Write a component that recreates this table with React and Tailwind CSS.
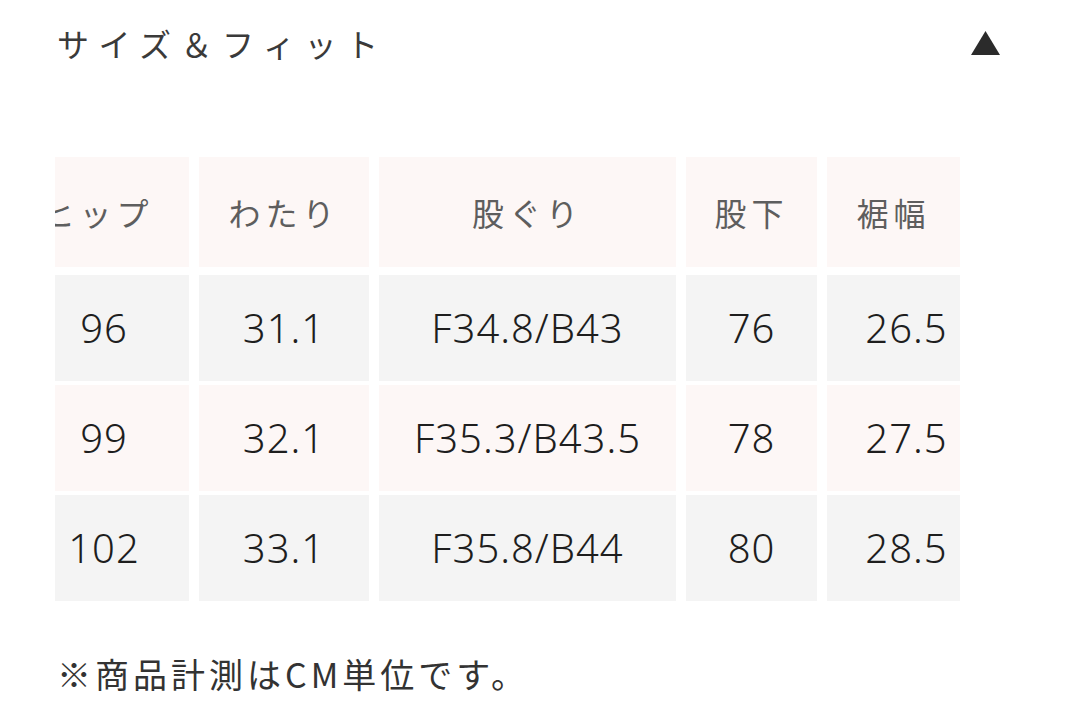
const headers = ['ヒップ', 'わたり', '股ぐり', '股下', '裾幅'];

const rows = [
  ['96', '31.1', 'F34.8/B43', '76', '26.5'],
  ['99', '32.1', 'F35.3/B43.5', '78', '27.5'],
  ['102', '33.1', 'F35.8/B44', '80', '28.5'],
];

const font = { fontFamily: '"Noto Sans CJK JP", "Noto Sans", sans-serif' };
const numFont = { fontFamily: '"Noto Sans", "Noto Sans CJK JP", sans-serif' };

const App = () => {
  return (
    <div className="w-[1080px] h-[725px] bg-white overflow-hidden" style={font}>
      <div className="h-[86px] flex items-center justify-between pl-[57px] pr-[80px]">
        <h2 className="text-[32px] leading-[40px] tracking-[9.5px] text-[#3a3a3a] font-normal">サイズ＆フィット</h2>
        <svg width="29" height="24" viewBox="0 0 29 24">
          <polygon points="14.5,0 29,24 0,24" fill="#2b2b2b" />
        </svg>
      </div>

      <div className="mt-[71px] ml-[55px] w-[905px] overflow-hidden">
        <div className="-ml-[36px] w-max">
          <div className="grid grid-cols-[170px_170px_297px_131px_133px] gap-x-[10px] h-[110px]">
            {headers.map((h, j) => (
              <div
                key={h}
                className={
                  'bg-[#fdf7f6] flex items-center justify-center text-[32px] tracking-[5px] text-[#5e5e5e]' +
                  (j === 0 ? ' pr-[12px]' : '')
                }
              >
                {h}
              </div>
            ))}
          </div>
          <div className="flex flex-col gap-y-[4px] mt-[8px]">
            {rows.map((r, i) => (
              <div
                key={i}
                className="grid grid-cols-[170px_170px_297px_131px_133px] gap-x-[10px] h-[106px]"
              >
                {r.map((v, j) => (
                  <div
                    key={j}
                    style={numFont}
                    className={
                      (i % 2 === 0 ? 'bg-[#f4f4f4]' : 'bg-[#fdf7f6]') +
                      (j === 4 ? ' pl-[26px]' : '') +
                      ' flex items-center justify-center text-[40px] font-light tracking-[1px] text-[#1e1e1e]'
                    }
                  >
                    {v}
                  </div>
                ))}
              </div>
            ))}
          </div>
        </div>
      </div>

      <p className="mt-[51px] pl-[57px] text-[34px] leading-[44px] tracking-[4px] text-[#333]">
        ※商品計測はCM単位です。
      </p>
    </div>
  );
};

export default App;
